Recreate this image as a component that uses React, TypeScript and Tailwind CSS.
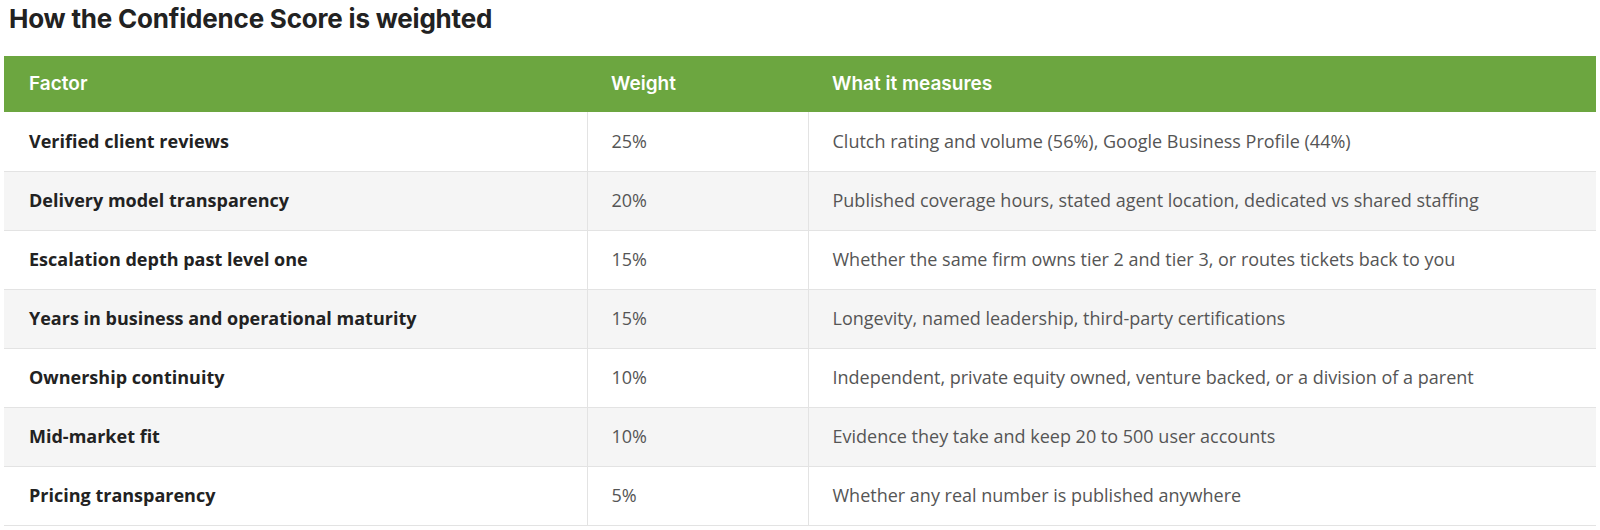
const rows = [
  { factor: 'Verified client reviews', weight: '25%', measures: 'Clutch rating and volume (56%), Google Business Profile (44%)' },
  { factor: 'Delivery model transparency', weight: '20%', measures: 'Published coverage hours, stated agent location, dedicated vs shared staffing' },
  { factor: 'Escalation depth past level one', weight: '15%', measures: 'Whether the same firm owns tier 2 and tier 3, or routes tickets back to you' },
  { factor: 'Years in business and operational maturity', weight: '15%', measures: 'Longevity, named leadership, third-party certifications' },
  { factor: 'Ownership continuity', weight: '10%', measures: 'Independent, private equity owned, venture backed, or a division of a parent' },
  { factor: 'Mid-market fit', weight: '10%', measures: 'Evidence they take and keep 20 to 500 user accounts' },
  { factor: 'Pricing transparency', weight: '5%', measures: 'Whether any real number is published anywhere' },
];

export default function App() {
  return (
    <div className="min-h-screen bg-white px-[4px]">
      <h2 className="ml-[5px] pt-1 mb-[22px] text-[26px] leading-[30px] font-bold text-[#222] font-['Inter',sans-serif] tracking-[-0.2px]">
        How the Confidence Score is weighted
      </h2>

      <table className="w-full table-fixed border-collapse font-['Open_Sans',sans-serif]">
        <colgroup>
          <col className="w-[583px]" />
          <col className="w-[221px]" />
          <col />
        </colgroup>
        <thead>
          <tr className="bg-[#6ca640] h-[56px]">
            <th className="pl-[25px] text-left text-[19px] font-semibold text-white font-['Inter',sans-serif]">Factor</th>
            <th className="pl-[24px] text-left text-[19px] font-semibold text-white font-['Inter',sans-serif]">Weight</th>
            <th className="pl-[24px] text-left text-[19px] font-semibold text-white font-['Inter',sans-serif]">What it measures</th>
          </tr>
        </thead>
        <tbody>
          {rows.map((r, i) => (
            <tr key={r.factor} className={`h-[59px] border-b border-[#e3e3e3] ${i % 2 === 1 ? 'bg-[#f5f5f5]' : 'bg-white'}`}>
              <td className="pl-[25px] text-[18px] font-bold text-[#222] border-r border-[#e3e3e3]">{r.factor}</td>
              <td className="pl-[24px] text-[18px] text-[#555] border-r border-[#e3e3e3]">{r.weight}</td>
              <td className="pl-[24px] text-[18px] text-[#555]">{r.measures}</td>
            </tr>
          ))}
        </tbody>
      </table>
    </div>
  );
}
